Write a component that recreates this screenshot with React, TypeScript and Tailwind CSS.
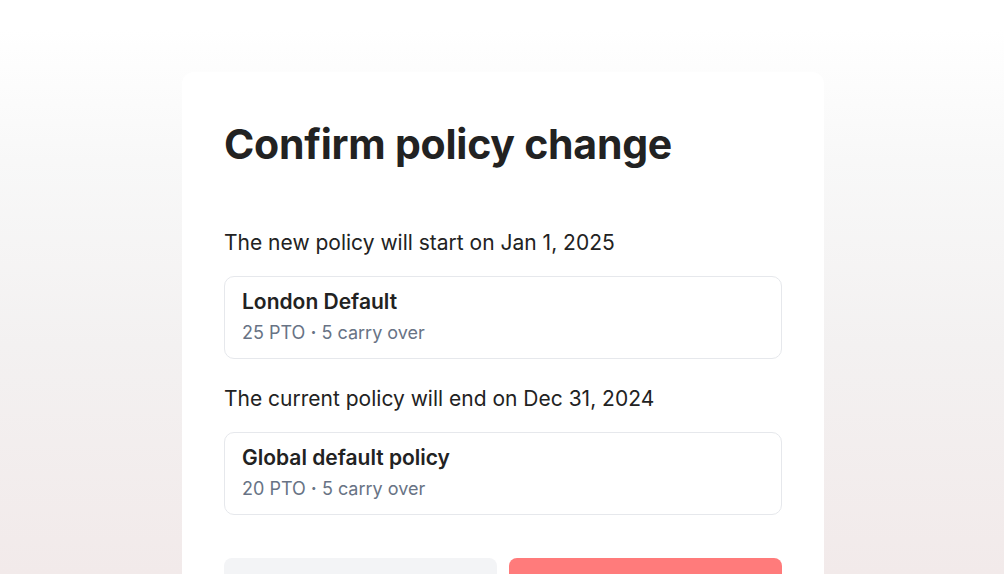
import React from "react";

type Policy = { name: string; pto: number; carry: number };

const PolicyBox = ({ policy }: { policy: Policy }) => (
  <div className="rounded-[10px] border border-[#e6e8ec] bg-white px-[17px] pt-[11px] pb-[13px]">
    <div className="text-[21px] font-semibold leading-7 text-[#222222]">
      {policy.name}
    </div>
    <div className="mt-[5px] text-[18px] leading-6 text-[#687385]">
      {policy.pto} PTO <span className="font-bold">·</span> {policy.carry} carry over
    </div>
  </div>
);

export default function App() {
  const next: Policy = { name: "London Default", pto: 25, carry: 5 };
  const current: Policy = { name: "Global default policy", pto: 20, carry: 5 };

  return (
    <div
      className="h-[574px] overflow-hidden bg-[linear-gradient(180deg,#ffffff_5%,#f8f8f8_28%,#f3f1f1_60%,#f2eaea_100%)] pt-[72px]"
      style={{ fontFamily: "Inter, 'Noto Sans', sans-serif" }}
    >
      <div className="ml-[182px] w-[642px] rounded-xl bg-white px-[42px] pt-[48px] pb-10">
        <h1 className="text-[41px] font-bold leading-[48px] tracking-[-0.006em] text-[#222222]">
          Confirm policy change
        </h1>

        <p className="mt-[61px] text-[21px] leading-7 text-[#222222]">
          The new policy will start on Jan 1, 2025
        </p>
        <div className="mt-[19px]">
          <PolicyBox policy={next} />
        </div>

        <p className="mt-[26px] text-[21px] leading-7 text-[#222222]">
          The current policy will end on Dec 31, 2024
        </p>
        <div className="mt-[19px]">
          <PolicyBox policy={current} />
        </div>

        <div className="mt-[43px] grid grid-cols-2 gap-3">
          <button className="h-12 rounded-lg bg-[#f3f4f6] text-[18px] font-semibold text-[#222222]">
            Cancel
          </button>
          <button className="h-12 rounded-lg bg-[#ff7b7b] text-[18px] font-semibold text-white">
            Confirm
          </button>
        </div>
      </div>
    </div>
  );
}
